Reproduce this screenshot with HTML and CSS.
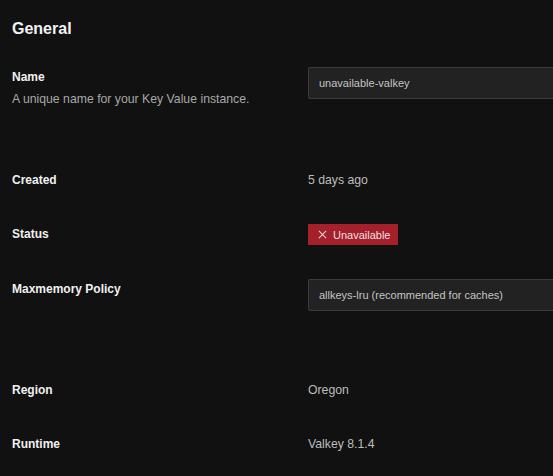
FILE: index.html
```html
<!DOCTYPE html>
<html>
<head>
<meta charset="utf-8">
<link rel="stylesheet" href="styles.css">
</head>
<body>
<div class="page">
  <h2 class="title">General</h2>
  <div class="rows">
    <div class="row">
      <div class="label-col">
        <div class="label">Name</div>
        <div class="desc">A unique name for your Key Value instance.</div>
      </div>
      <div class="value-col">
        <div class="input">unavailable-valkey</div>
        <div class="help help-tall"></div>
      </div>
    </div>
    <div class="row">
      <div class="label-col"><div class="label">Created</div></div>
      <div class="value-col"><div class="value">5 days ago</div></div>
    </div>
    <div class="row">
      <div class="label-col"><div class="label">Status</div></div>
      <div class="value-col">
        <span class="badge">
          <svg class="x" viewBox="0 0 10 10" width="9" height="9"><path d="M1 1L9 9M9 1L1 9" stroke="#f4d4d6" stroke-width="1.2" fill="none"/></svg>
          Unavailable
        </span>
      </div>
    </div>
    <div class="row">
      <div class="label-col"><div class="label">Maxmemory Policy</div></div>
      <div class="value-col">
        <div class="input">allkeys-lru (recommended for caches)</div>
        <div class="help"></div>
      </div>
    </div>
    <div class="row">
      <div class="label-col"><div class="label">Region</div></div>
      <div class="value-col"><div class="value">Oregon</div></div>
    </div>
    <div class="row">
      <div class="label-col"><div class="label">Runtime</div></div>
      <div class="value-col"><div class="value">Valkey 8.1.4</div></div>
    </div>
  </div>
</div>
</body>
</html>
```
FILE: styles.css
```css
html, body {
  margin: 0;
  padding: 0;
  background: #111111;
  overflow: hidden;
}
body {
  font-family: "Liberation Sans", Arial, sans-serif;
  color: #ededed;
  width: 553px;
  height: 476px;
}
.page {
  padding: 18px 0 0 12px;
}
.title {
  margin: 0;
  font-size: 16px;
  line-height: 22px;
  font-weight: 700;
  color: #f2f2f2;
}
.rows {
  display: flex;
  flex-direction: column;
  gap: 34px;
  margin-top: 27px;
}
.row {
  display: flex;
  align-items: flex-start;
}
.label-col {
  width: 296px;
  flex: none;
}
.label {
  font-size: 12px;
  line-height: 20px;
  font-weight: 700;
  color: #f0f0f0;
}
.desc {
  font-size: 12.25px;
  line-height: 20px;
  color: #a8a8a8;
  margin-top: 2px;
}
.value-col {
  flex: 1;
  min-width: 0;
}
.input {
  box-sizing: border-box;
  height: 32px;
  width: 260px;
  background: #222222;
  border: 1px solid #3b3b3b;
  border-radius: 2px;
  padding: 0 10px;
  font-size: 11px;
  line-height: 30px;
  color: #c4c4c4;
  white-space: nowrap;
}
.help {
  height: 35px;
}
.help-tall {
  height: 37px;
}
.value {
  font-size: 12.25px;
  line-height: 20px;
  color: #bdbdbd;
}
.badge {
  display: inline-flex;
  align-items: center;
  gap: 6px;
  height: 21px;
  box-sizing: border-box;
  padding: 0 8px 0 10px;
  background: #a4202b;
  color: #f6dfe1;
  font-size: 11px;
}
.x {
  display: block;
}
```
